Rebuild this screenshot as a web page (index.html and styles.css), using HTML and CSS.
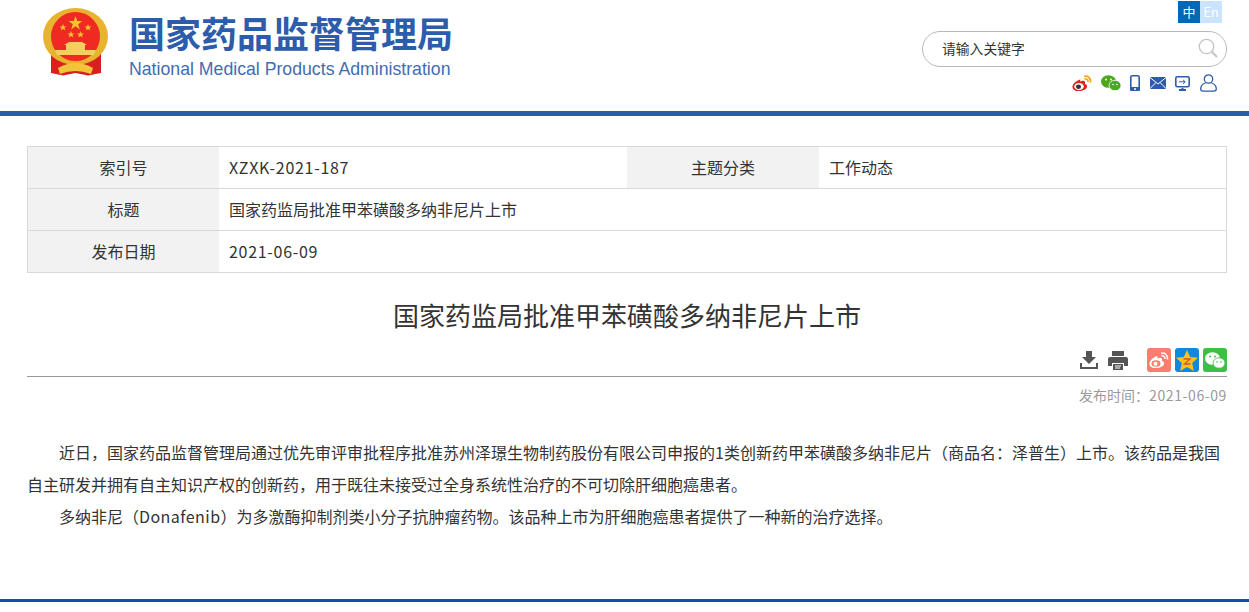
FILE: index.html
```html
<!DOCTYPE html>
<html lang="zh-CN">
<head>
    <meta charset="UTF-8">
    <title>国家药监局批准甲苯磺酸多纳非尼片上市</title>
    <link rel="stylesheet" href="styles.css">
</head>
<body>
    <!-- 头部 -->
    <header class="header">
        <div class="logo">
            <svg class="emblem" width="66" height="68" viewBox="0 0 66 68">
                <path d="M8 40 L8 65 L20 67.500 L32.500 65 L45 67.500 L58 65 L58 40 Z" fill="#d9201e"/>
                <ellipse cx="32.500" cy="28.500" rx="32.500" ry="28.500" fill="#e8b32e"/>
                <circle cx="32.500" cy="28.500" r="24.500" fill="#ee2a22"/>
                <polygon points="32.500,8 34.200,13 39.500,13 35.200,16.200 36.800,21.500 32.500,18.300 28.200,21.500 29.800,16.200 25.500,13 30.800,13" fill="#f6c22e"/>
                <polygon points="20,16 21,18.400 23.600,18.400 21.500,20 22.300,22.500 20,21 17.700,22.500 18.500,20 16.400,18.400 19,18.400" fill="#f6c22e"/>
                <polygon points="45,16 46,18.400 48.600,18.400 46.500,20 47.300,22.500 45,21 42.700,22.500 43.500,20 41.400,18.400 44,18.400" fill="#f6c22e"/>
                <polygon points="28,23 29,25.400 31.600,25.400 29.500,27 30.300,29.500 28,28 25.700,29.500 26.500,27 24.400,25.400 27,25.400" fill="#f6c22e"/>
                <polygon points="37.500,23 38.500,25.400 41.100,25.400 39,27 39.800,29.500 37.500,28 35.200,29.500 36,27 33.900,25.400 36.500,25.400" fill="#f6c22e"/>
                <path d="M26 34 H39 L44 37 H21 Z M23 37 H42 V42 H23 Z M12 42 H53 L51 47 H14 Z" fill="#f4cf5e"/>
                <path d="M15 60 Q32.500 50 50 60 L48 66 Q32.500 60 17 66 Z" fill="#f0c53c"/>
            </svg>
            <div class="logo-text">
                <div class="logo-cn">国家药品监督管理局</div>
                <div class="logo-en">National Medical Products Administration</div>
            </div>
        </div>
        <div class="header-right">
            <div class="lang">
                <a class="lang-cn">中</a>
                <a class="lang-en">En</a>
            </div>
            <div class="search">
                <span class="search-text">请输入关键字</span>
                <svg width="20" height="20" viewBox="0 0 20 20" fill="none" stroke="#c4c4c4">
                    <circle cx="8.500" cy="8.500" r="7.200" stroke-width="1.300"/>
                    <path d="M13.800 13.800 L19 19" stroke-width="2"/>
                </svg>
            </div>
            <div class="top-icons">
                <!-- 微博 -->
                <svg class="ic-weibo" width="20" height="17" viewBox="0 0 20 17">
                    <path d="M8 4.500 C3.500 6 0 9.500 .5 12.500 C1 15.500 5 16.500 8.500 16 C12.500 15.500 15.500 13.500 15 10.800 C14.800 9.600 13.600 9.300 12.800 9 C13.300 7.800 13.300 6.500 12 6 C10.800 5.600 9.200 6 8 6.500 C8.300 5.200 8.800 4.300 8 4.500 Z" fill="#e2231a"/>
                    <ellipse cx="7" cy="11.500" rx="4.800" ry="3.500" fill="#fff"/>
                    <ellipse cx="6.500" cy="11.700" rx="2.500" ry="2.200" fill="#333"/>
                    <path d="M12 1.500 C15.500 0 19 3 18.500 7.500 M12.500 4 C14.500 3.300 16.300 5 16 7" fill="none" stroke="#f5a623" stroke-width="1.700"/>
                </svg>
                <!-- 微信 -->
                <svg class="ic-wechat" width="20" height="16" viewBox="0 0 20 16">
                    <ellipse cx="7.500" cy="6.500" rx="7.500" ry="6.300" fill="#4ca81c"/>
                    <ellipse cx="14" cy="10.500" rx="6" ry="5.200" fill="#4ca81c" stroke="#fff" stroke-width=".8"/>
                    <circle cx="5" cy="4.500" r="1" fill="#fff"/><circle cx="10" cy="4.500" r="1" fill="#fff"/>
                    <circle cx="12" cy="9.500" r=".8" fill="#fff"/><circle cx="16" cy="9.500" r=".8" fill="#fff"/>
                </svg>
                <!-- 手机 -->
                <svg class="ic-phone" width="10" height="16" viewBox="0 0 10 16">
                    <rect x=".8" y=".8" width="8.400" height="14.400" rx="1.500" fill="#fff" stroke="#2d5cab" stroke-width="1.600"/>
                    <rect x="0" y="12" width="10" height="4" rx="1.500" fill="#2d5cab"/>
                    <circle cx="5" cy="14" r="1" fill="#fff"/>
                </svg>
                <!-- 邮件 -->
                <svg class="ic-mail" width="16" height="12" viewBox="0 0 16 12">
                    <rect width="16" height="12" rx="1" fill="#2d5cab"/>
                    <path d="M0 .5 L8 7 L16 .5 M0 11.500 L6 5.500 M16 11.500 L10 5.500" fill="none" stroke="#fff" stroke-width="1"/>
                </svg>
                <!-- 电脑 -->
                <svg class="ic-screen" width="15" height="15" viewBox="0 0 15 15">
                    <rect x=".8" y=".8" width="13.400" height="10" rx="1.500" fill="#fff" stroke="#2d5cab" stroke-width="1.600"/>
                    <path d="M6.500 12 H8.500 V13 H11 V15 H4 V13 H6.500 Z" fill="#2d5cab"/>
                    <path d="M4 5.800 H10 M8 3.800 L10.200 5.800 L8 7.800" fill="none" stroke="#2d5cab" stroke-width="1"/>
                </svg>
                <!-- 用户 -->
                <svg class="ic-user" width="17" height="18" viewBox="0 0 17 18" fill="none" stroke="#2d5cab" stroke-width="1.300">
                    <circle cx="8.500" cy="5" r="4.200"/>
                    <path d="M5.500 9 C2.500 10 .7 12.500 .7 14.800 C.7 16.300 1.700 17.200 3 17.200 H14 C15.300 17.200 16.300 16.300 16.300 14.800 C16.300 12.500 14.500 10 11.500 9"/>
                </svg>
            </div>
        </div>
    </header>

    <div class="main">
        <!-- 信息表 -->
        <div class="info-table">
            <div class="info-label">索引号</div>
            <div class="info-value latin">XZXK-2021-187</div>
            <div class="info-label">主题分类</div>
            <div class="info-value">工作动态</div>
            <div class="info-label">标题</div>
            <div class="info-value info-wide">国家药监局批准甲苯磺酸多纳非尼片上市</div>
            <div class="info-label">发布日期</div>
            <div class="info-value info-wide latin">2021-06-09</div>
        </div>

        <h1 class="title">国家药监局批准甲苯磺酸多纳非尼片上市</h1>

        <!-- 工具条 -->
        <div class="tools">
            <svg class="tool-download" width="18" height="18" viewBox="0 0 18 18" fill="#555">
                <path d="M6 0 H12 V6 H16 L9 13 L2 6 H6 Z"/>
                <path d="M0 12 H2 V16 H16 V12 H18 V18 H0 Z"/>
            </svg>
            <svg class="tool-print" width="20" height="19" viewBox="0 0 20 19">
                <path d="M4 0 H16 V5 H4 Z" fill="#555"/>
                <path d="M2 6 H18 A2 2 0 0 1 20 8 V15 H16 V12 H4 V15 H0 V8 A2 2 0 0 1 2 6 Z" fill="#555"/>
                <path d="M5 13 H15 V19 H5 Z" fill="#555"/>
                <path d="M7 15 H13 M7 17 H12" stroke="#fff" stroke-width="1"/>
            </svg>
            <span class="share share-weibo">
                <svg width="20" height="17" viewBox="0 0 20 17">
                    <path d="M8 4 C3.500 5.500 0 9.500 .5 12.500 C1 15.500 5 16.500 8.500 16 C12.500 15.500 15.500 13.500 15 10.800 C14.800 9.600 13.600 9.300 12.800 9 C13.300 7.800 13.300 6.500 12 6 C10.800 5.600 9.200 6 8 6.500 C8.300 5.200 8.800 3.800 8 4 Z" fill="#fff"/>
                    <ellipse cx="7" cy="11.500" rx="4.500" ry="3.300" fill="#fa7d6f"/>
                    <circle cx="6.500" cy="11.700" r="2" fill="#fff"/>
                    <path d="M12 1.500 C15.500 0 19 3 18.500 7.500 M12.500 4 C14.500 3.300 16.300 5 16 7" fill="none" stroke="#fff" stroke-width="1.500"/>
                </svg>
            </span>
            <span class="share share-qzone">
                <svg width="22" height="21" viewBox="0 0 22 21">
                    <polygon points="11,0 14.200,7 22,7.800 16.200,13 17.800,21 11,17 4.200,21 5.800,13 0,7.800 7.800,7" fill="#f9c21c"/>
                    <path d="M7.500 9 H14 L8.500 14 H14.500" fill="none" stroke="#d8562a" stroke-width="1.300"/>
                </svg>
            </span>
            <span class="share share-wechat">
                <svg width="20" height="17" viewBox="0 0 20 17">
                    <ellipse cx="7.500" cy="6.500" rx="7.500" ry="6.300" fill="#fff"/>
                    <ellipse cx="14" cy="11" rx="6" ry="5.200" fill="#fff" stroke="#3dbf45" stroke-width=".8"/>
                    <circle cx="5" cy="4.500" r="1" fill="#3dbf45"/><circle cx="10" cy="4.500" r="1" fill="#3dbf45"/>
                    <circle cx="12" cy="10" r=".8" fill="#3dbf45"/><circle cx="16" cy="10" r=".8" fill="#3dbf45"/>
                </svg>
            </span>
        </div>
        <div class="pub-date">发布时间：<span class="pub-num">2021-06-09</span></div>

        <!-- 正文 -->
        <div class="article">
            <p>近日，国家药品监督管理局通过优先审评审批程序批准苏州泽璟生物制药股份有限公司申报的1类创新药甲苯磺酸多纳非尼片（商品名：泽普生）上市。该药品是我国自主研发并拥有自主知识产权的创新药，用于既往未接受过全身系统性治疗的不可切除肝细胞癌患者。</p>
            <p>多纳非尼（<span class="latin-word">Donafenib</span>）为多激酶抑制剂类小分子抗肿瘤药物。该品种上市为肝细胞癌患者提供了一种新的治疗选择。</p>
        </div>
    </div>

    <div class="footer-line"></div>
</body>
</html>
```

FILE: styles.css
```css
* {
    box-sizing: border-box;
}

html, body {
    height: 612px;
    overflow: hidden;
}

body {
    margin: 0;
    display: flex;
    flex-direction: column;
    font-family: "Noto Sans CJK SC", "Noto Sans", sans-serif;
    color: #333;
    background: #fff;
}

/* 头部 */
.header {
    height: 116px;
    flex: none;
    display: flex;
    justify-content: space-between;
    padding: 0 22px 0 43px;
    border-bottom: 5px solid #2d5cab;
}

.logo {
    display: flex;
    align-items: flex-start;
    padding-top: 8px;
}

.emblem {
    flex: none;
}

.logo-text {
    margin-left: 20px;
    color: #2d5cab;
}

.logo-cn {
    font-size: 36px;
    line-height: 46px;
    font-weight: 700;
    white-space: nowrap;
    margin-top: 1px;
}

.logo-en {
    font-family: "Liberation Sans", sans-serif;
    font-size: 17.7px;
    line-height: 22px;
    white-space: nowrap;
    margin-top: 3px;
    opacity: .9;
}

.header-right {
    width: 305px;
    display: flex;
    flex-direction: column;
    align-items: flex-end;
    padding-top: 1px;
}

.lang {
    display: flex;
    margin-right: 5px;
    font-size: 13px;
    line-height: 22px;
    color: #fff;
    text-align: center;
}

.lang-cn {
    width: 22px;
    background: #0068b7;
}

.lang-en {
    width: 22px;
    background: #c9e4fe;
}

.search {
    width: 305px;
    height: 36px;
    margin-top: 8px;
    border: 1px solid #b9b9b9;
    border-radius: 18px;
    display: flex;
    align-items: center;
    justify-content: space-between;
    padding: 0 8px 2px 19px;
}

.search-text {
    font-size: 13.8px;
    color: #333;
}

.top-icons {
    display: flex;
    align-items: center;
    height: 18px;
    margin-top: 7px;
    margin-right: 10px;
}

.ic-wechat { margin-left: 9px; }
.ic-phone { margin-left: 9px; }
.ic-mail { margin-left: 10px; }
.ic-screen { margin-left: 9px; }
.ic-user { margin-left: 10px; }

/* 主体 */
.main {
    flex: 1;
    padding: 30px 22px 0 27px;
}

.info-table {
    display: grid;
    grid-template-columns: 191px 408px 192px 1fr;
    grid-auto-rows: 42px;
    border: 1px solid #d9d9d9;
    border-bottom: 0;
    height: 127px;
}

.info-label,
.info-value {
    display: flex;
    align-items: center;
    font-size: 16px;
    padding-bottom: 2px;
    border-bottom: 1px solid #d9d9d9;
}

.info-label {
    justify-content: center;
    background: #f2f2f2;
}

.info-value {
    padding-left: 10px;
}

.info-wide {
    grid-column: span 3;
}

.latin {
    letter-spacing: .7px;
}

.title {
    margin: 21px 0 0;
    font-size: 26px;
    line-height: 42px;
    font-weight: 400;
    text-align: center;
}

.tools {
    display: flex;
    justify-content: flex-end;
    align-items: center;
    height: 31px;
    margin-top: 10px;
    padding-bottom: 2px;
    border-bottom: 1px solid #999;
}

.tool-print {
    margin-left: 10px;
}

.share {
    width: 24px;
    height: 24px;
    border-radius: 3px;
    margin-left: 4px;
    display: flex;
    align-items: center;
    justify-content: center;
}

.share-weibo {
    margin-left: 19px;
    background: #fa7d6f;
}

.share-qzone {
    background: #0f88dd;
}

.share-wechat {
    background: #3dbf45;
}

.pub-date {
    margin-top: 8px;
    font-size: 14px;
    line-height: 20px;
    color: #999;
    text-align: right;
}

.pub-num {
    letter-spacing: .6px;
}

.article {
    margin-top: 31px;
    font-size: 16px;
    line-height: 32px;
}

.article p {
    margin: 0;
    text-indent: 32px;
}

.latin-word {
    letter-spacing: .45px;
}

.footer-line {
    flex: none;
    height: 3px;
    margin-bottom: 10px;
    background: #0b50b8;
}
```
